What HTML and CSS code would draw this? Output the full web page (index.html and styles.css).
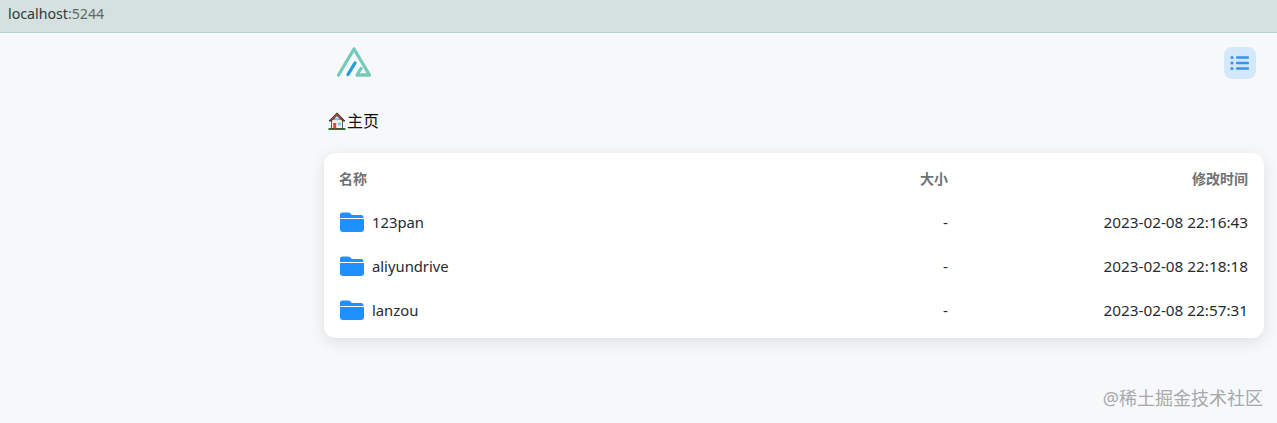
FILE: index.html
```html
<!DOCTYPE html>
<html lang="zh">
<head>
<meta charset="utf-8">
<title>主页</title>
<link rel="stylesheet" href="styles.css">
</head>
<body>
<div class="urlbar"><span class="host">localhost</span><span class="port">:5244</span></div>
<main class="page">
  <header class="header">
    <svg class="logo" viewBox="0 0 36 32" width="36" height="32" aria-label="logo">
      <path d="M2.500 29 L18 3 L33.500 29 H21 L25 22.500" fill="none" stroke="#76cabb" stroke-width="3.300" stroke-linejoin="round" stroke-linecap="round"/>
      <path d="M12 28.500 L19 17" fill="none" stroke="#1f9ede" stroke-width="3.300" stroke-linecap="round"/>
    </svg>
    <button class="menu" aria-label="menu">
      <svg viewBox="0 0 20 16" width="20" height="16">
        <circle cx="2" cy="2.500" r="1.600" fill="#3b92ee"/><circle cx="2" cy="8" r="1.600" fill="#3b92ee"/><circle cx="2" cy="13.500" r="1.600" fill="#3b92ee"/>
        <rect x="6" y="1.300" width="13" height="2.400" rx="1" fill="#3b92ee"/><rect x="6" y="6.800" width="13" height="2.400" rx="1" fill="#3b92ee"/><rect x="6" y="12.300" width="13" height="2.400" rx="1" fill="#3b92ee"/>
      </svg>
    </button>
  </header>
  <nav class="crumb">
    <svg class="house" viewBox="0 0 18 18" width="18" height="18">
      <rect x="0.500" y="16" width="17" height="2" fill="#1f7a2b"/>
      <path d="M3.500 7 H14.500 V16.500 H3.500 Z" fill="#f1f1ea" stroke="#333" stroke-width="0.800"/>
      <path d="M1 9 L9 0.800 L17 9 L14.800 9 L9 3.600 L3.200 9 Z" fill="#b5482f" stroke="#222" stroke-width="0.800" stroke-linejoin="round"/>
      <rect x="5.200" y="11" width="3" height="5.300" fill="#dc4a30"/>
      <rect x="9.800" y="10.500" width="3.200" height="3" fill="#7fd0ee"/>
      <circle cx="9" cy="7" r="1.400" fill="#7fd0ee"/>
    </svg><span>主页</span>
  </nav>
  <section class="card">
    <div class="row head"><span class="name">名称</span><span class="size">大小</span><span class="time">修改时间</span></div>
    <div class="row"><span class="name"><svg class="folder" viewBox="0 0 24 20" width="24" height="20"><path d="M0 3 Q0 0.500 2.500 0.500 H8 Q9.500 0.500 10.500 1.500 L12 3 H21 Q23.500 3 23.500 5.500 V6 H0 Z M0 7 H24 V17 Q24 20 21 20 H3 Q0 20 0 17 Z" fill="#1e90ff"/></svg><span>123pan</span></span><span class="size">-</span><span class="time">2023-02-08 22:16:43</span></div>
    <div class="row"><span class="name"><svg class="folder" viewBox="0 0 24 20" width="24" height="20"><path d="M0 3 Q0 0.500 2.500 0.500 H8 Q9.500 0.500 10.500 1.500 L12 3 H21 Q23.500 3 23.500 5.500 V6 H0 Z M0 7 H24 V17 Q24 20 21 20 H3 Q0 20 0 17 Z" fill="#1e90ff"/></svg><span>aliyundrive</span></span><span class="size">-</span><span class="time">2023-02-08 22:18:18</span></div>
    <div class="row"><span class="name"><svg class="folder" viewBox="0 0 24 20" width="24" height="20"><path d="M0 3 Q0 0.500 2.500 0.500 H8 Q9.500 0.500 10.500 1.500 L12 3 H21 Q23.500 3 23.500 5.500 V6 H0 Z M0 7 H24 V17 Q24 20 21 20 H3 Q0 20 0 17 Z" fill="#1e90ff"/></svg><span>lanzou</span></span><span class="size">-</span><span class="time">2023-02-08 22:57:31</span></div>
  </section>
</main>
<div class="watermark">@稀土掘金技术社区</div>
</body>
</html>
```
FILE: styles.css
```css
* { box-sizing: border-box; }
html, body { margin: 0; height: 100%; overflow: hidden; }
body {
  position: relative;
  height: 423px;
  background: #f7f8fa;
  font-family: "Noto Sans", "Noto Sans CJK SC", sans-serif;
  color: #1a202c;
  font-size: 14px;
}
.urlbar {
  height: 33px;
  padding: 4px 8px 0;
  background: #d5e0e0;
  border-bottom: 1px solid #b4d3ce;
  font-size: 14.200px;
  line-height: 19px;
}
.host { color: #2f3a3a; }
.port { color: #5d6a6a; }
.page { padding: 0 13px 0 324px; }
.header {
  height: 60px;
  display: flex;
  align-items: center;
  justify-content: space-between;
  padding: 0 8px 0 12px;
}
.logo { display: block; margin-top: -3px; }
.menu {
  width: 32px;
  height: 32px;
  padding: 0;
  border: 0;
  border-radius: 8px;
  background: #d3e7fd;
  display: flex;
  align-items: center;
  justify-content: center;
}
.crumb {
  height: 60px;
  padding: 16px 0 0 4px;
  display: flex;
  align-items: flex-start;
  font-size: 16px;
  line-height: 24px;
  color: #111;
}
.house { margin: 3px 1px 0 0; flex: none; }
.card {
  width: 940px;
  height: 185px;
  padding: 3px 16px 5px 15px;
  background: #fff;
  border-radius: 12px;
  box-shadow: 0 4px 16px rgba(0, 0, 0, 0.1);
}
.row {
  height: 44px;
  display: grid;
  grid-template-columns: 1fr 130px 300px;
  align-items: center;
  font-size: 15.300px;
  color: #262b31;
}
.name { display: flex; align-items: center; font-size: 14.800px; }
.head { font-size: 14px; font-weight: 700; color: #6f7275; }
.head .name { font-size: 14px; }
.size, .time { text-align: right; }
.folder { margin: 0 8px 0 1px; flex: none; }
.watermark {
  position: absolute;
  right: 14px;
  bottom: 14px;
  font-size: 18px;
  line-height: 22px;
  color: #a6a8ab;
}
```
